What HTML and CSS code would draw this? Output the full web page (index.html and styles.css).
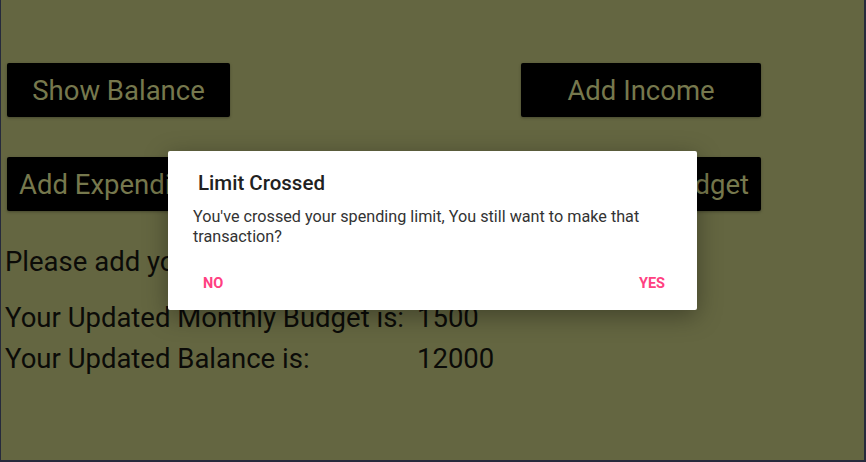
FILE: index.html
```html
<!DOCTYPE html>
<html>
<head>
<meta charset="utf-8">
<link rel="stylesheet" href="styles.css">
</head>
<body>
<div class="screen">
  <div class="row row-top">
    <button class="btn btn-balance">Show Balance</button>
    <button class="btn btn-income">Add Income</button>
  </div>
  <div class="row row-second">
    <button class="btn btn-expense">Add Expenditure</button>
    <button class="btn btn-budget">Update Budget</button>
  </div>
  <p class="line">Please add your monthly budget first</p>
  <div class="stat stat-first"><span class="label">Your Updated Monthly Budget is:</span><span class="value">1500</span></div>
  <div class="stat"><span class="label">Your Updated Balance is:</span><span class="value">12000</span></div>

  <div class="dialog">
    <h2 class="dialog-title">Limit Crossed</h2>
    <p class="dialog-msg">You've crossed your spending limit, You still want to make that transaction?</p>
    <div class="dialog-actions">
      <span class="action">NO</span>
      <span class="action">YES</span>
    </div>
  </div>
</div>
</body>
</html>
```
FILE: styles.css
```css
* { box-sizing: border-box; }
html, body { margin: 0; padding: 0; }
body {
  width: 866px;
  height: 462px;
  overflow: hidden;
  font-family: Roboto, "Liberation Sans", sans-serif;
  background: #646641;
}
.screen {
  position: relative;
  width: 866px;
  height: 462px;
  background: #646641;
  border-left: 1px solid #262a3c;
  border-right: 2px solid #262a3c;
  border-bottom: 2px solid #262a3c;
  padding: 63px 0 0 4px;
}
.row {
  display: flex;
  justify-content: space-between;
  width: 754px;
  margin-left: 2px;
}
.row-second { margin-top: 40px; }
.btn {
  height: 54px;
  background: #000;
  border: none;
  border-radius: 2px;
  color: #76784d;
  font-family: Roboto, "Liberation Sans", sans-serif;
  font-size: 27.5px;
  padding: 0;
  box-shadow: 0 1px 3px rgba(0,0,0,0.3);
}
.btn-balance { width: 223px; }
.btn-income { width: 240px; }
.btn-expense { width: 250px; text-align: left; padding-left: 12px; }
.btn-budget { width: 240px; text-align: right; padding-right: 12px; }
.line {
  margin: 31px 0 0 0;
  font-size: 27.5px;
  color: #0b0b08;
  line-height: 40px;
}
.stat {
  display: flex;
  font-size: 27.5px;
  color: #0b0b08;
  line-height: 40px;
}
.stat-first { margin-top: 16px; }
.stat + .stat { margin-top: 1px; }
.label { width: 412px; }

.dialog {
  position: absolute;
  left: 167px;
  top: 151px;
  width: 529px;
  height: 159px;
  background: #fff;
  border-radius: 2px;
  box-shadow: 0 6px 24px rgba(0,0,0,0.35);
  padding: 19px 24px 0 25px;
}
.dialog-title {
  margin: 0 0 0 5px;
  font-size: 20.5px;
  font-weight: 500;
  color: #212121;
  line-height: 27px;
}
.dialog-msg {
  margin: 10px 0 0 0;
  font-size: 16.2px;
  color: #333;
  line-height: 20px;
}
.dialog-actions {
  display: flex;
  justify-content: space-between;
  margin-top: 28px;
  padding: 0 8px 0 10px;
}
.action {
  color: #ff4081;
  font-size: 14.5px;
  font-weight: 700;
}
```
